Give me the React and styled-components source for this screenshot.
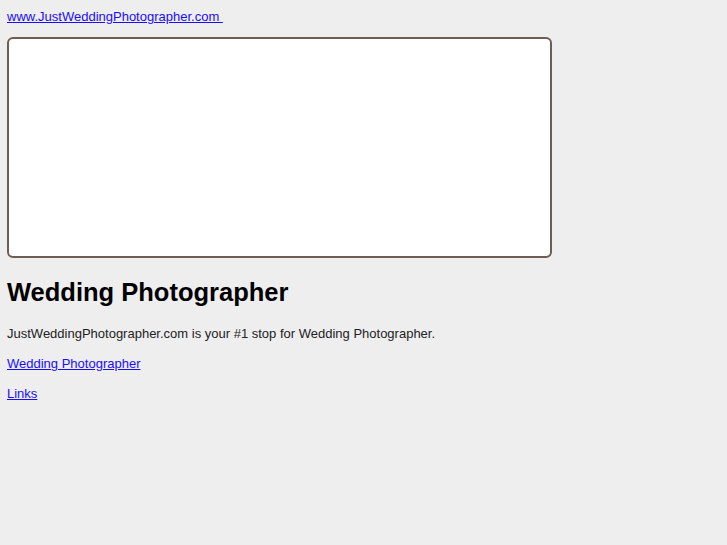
import React from 'react';
import styled, { createGlobalStyle } from 'styled-components';

const Global = createGlobalStyle`
  body {
    margin: 0;
    padding: 9px 7px 8px;
    background: #eeeeee;
    font-family: "Liberation Sans", Arial, sans-serif;
    font-size: 13px;
    color: #222222;
  }
`;

const Header = styled.div`
  line-height: 15px;
`;

const TopLink = styled.a`
  color: #1a0dff;
  text-decoration: underline;
`;

const Frame = styled.div`
  width: 541px;
  height: 217px;
  margin-top: 13px;
  background: #ffffff;
  border: 2px solid #6e5d52;
  border-radius: 6px;
`;

const Heading = styled.h1`
  margin: 19px 0 19px;
  font-size: 25.5px;
  line-height: 30px;
  font-weight: bold;
  color: #000000;
`;

const Text = styled.p`
  margin: 0 0 15px;
  line-height: 15px;
`;

const Link = styled.a`
  color: #1a0dff;
`;

export default function App() {
  return (
    <>
      <Global />
      <Header>
        <TopLink href="#">www.JustWeddingPhotographer.com&nbsp;</TopLink>
      </Header>
      <Frame />
      <Heading>Wedding Photographer</Heading>
      <Text>JustWeddingPhotographer.com is your #1 stop for Wedding Photographer.</Text>
      <Text>
        <Link href="#">Wedding Photographer</Link>
      </Text>
      <Text>
        <Link href="#">Links</Link>
      </Text>
    </>
  );
}
